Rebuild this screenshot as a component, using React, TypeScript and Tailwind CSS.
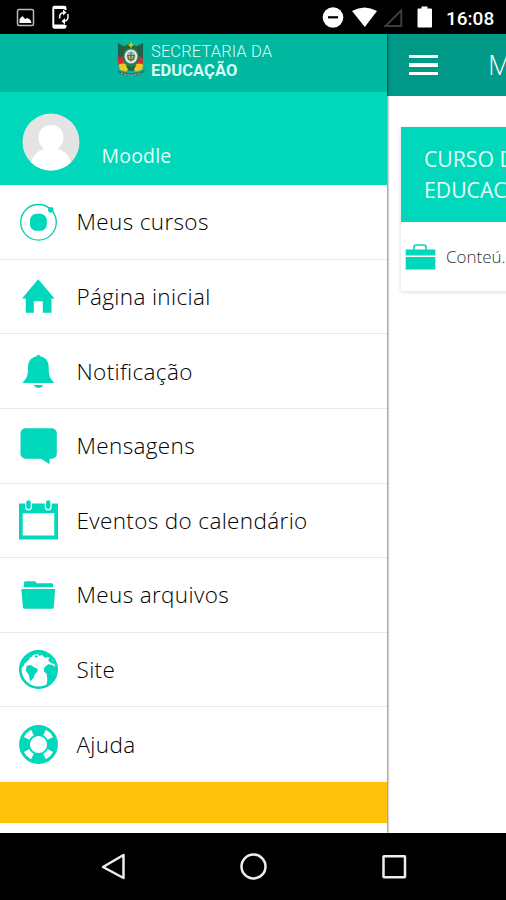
import type { ReactNode } from "react";

const Svg = ({ children, className = "w-10 h-10" }: { children: ReactNode; className?: string }) => (
  <svg viewBox="0 0 40 40" className={className} fill="#00d7bb">
    {children}
  </svg>
);

const items: { label: string; icon: ReactNode }[] = [
  {
    label: "Meus cursos",
    icon: (
      <Svg>
        <circle cx="20.5" cy="20.3" r="17.8" fill="none" stroke="#00cdb2" strokeWidth="1.3" />
        <rect x="12" y="11.8" width="16.800" height="17" rx="6.500" />
        <circle cx="32.8" cy="7.8" r="2.8" />
      </Svg>
    ),
  },
  {
    label: "Página inicial",
    icon: (
      <Svg>
        <path d="M20.2 3.2 36.5 22.6H33.5V36.7H24.8V25.2H15.8V36.7H7.8V22.6H4Z" />
      </Svg>
    ),
  },
  {
    label: "Notificação",
    icon: (
      <Svg>
        <path d="M20.5 3.900c1 0 2 .7 2.200 1.600 5.200 1.100 8 5 8 10.500 0 8.500.8 11 5.800 15.900H4.200C9.200 27 10 24.500 10 16 10 10.500 13.100 6.600 18.300 5.500c.2-.9 1.200-1.600 2.200-1.600Z" />
        <path d="M15.800 34h9.400c-.8 2-2.500 3-4.700 3s-3.900-1-4.700-3Z" />
      </Svg>
    ),
  },
  {
    label: "Mensagens",
    icon: (
      <Svg>
        <path d="M7.500 2.300h26.300a5 5 0 0 1 5 5v20.400a5 5 0 0 1-5 5h-2.200v5.500l-8.500-5.500H7.500a5 5 0 0 1-5-5V7.300a5 5 0 0 1 5-5Z" />
      </Svg>
    ),
  },
  {
    label: "Eventos do calendário",
    icon: (
      <Svg>
        <path fillRule="evenodd" d="M1 3.400h39v36.200H1ZM4.700 13.200v22.300h31.600V13.200Z" />
        <rect x="7" y="-1" width="7" height="11.500" rx="3.500" fill="white" />
        <rect x="26.700" y="-1" width="7" height="11.500" rx="3.500" fill="white" />
        <rect x="8.300" y=".3" width="4.400" height="8.600" rx="2.200" />
        <rect x="28" y=".3" width="4.400" height="8.600" rx="2.200" />
      </Svg>
    ),
  },
  {
    label: "Meus arquivos",
    icon: (
      <Svg>
        <path d="M5.800 12.200V8q0-1.700 1.700-1.700h9q1.600 0 2 2h15.200q1.500 0 1.500 1.500v2.400Z" />
        <path d="M3.300 14h33.800l-1.400 18.500q-.1 1.200-1.500 1.200H6.500q-1.300 0-1.500-1.200Z" />
      </Svg>
    ),
  },
  {
    label: "Site",
    icon: (
      <Svg>
        <circle cx="20.500" cy="19.500" r="18.200" fill="white" stroke="#00d2b7" strokeWidth="2.600" />
        <path d="M5 8C8 4.500 12 2.500 17 2l13 1 6 6-3 1-3-3-3 1-3-3-3 1-1-2-5 1-1 2-3 0-1 3-3 3-2 4-3-1Z" />
        <path d="m8.700 15.700 4-.6 3 2 3.700 1.700.5 2.300-3 3-1.100 3.500-3.500 4-1.600-6.800-3-4.300Z" />
        <path d="m27 17 3-2.700 4 .5 4.500 3-.5 8-6 9-3.500 2 .8-7-.6-6-2.600-2-.4-3ZM30 9.500l2-1 4.500 4v2l-5-2.500Z" />
        <path d="m15 4 2 2 2-1 1 2-2 1Z" />
        <path d="m15 9 5-2 4.500-.500 4 2.500-1 2-3 2-3 3-3-1-2 2-3-3-2-1Z" fill="white" />
        <path d="m9 8 4-1.500-2 3-4 4Z" />
      </Svg>
    ),
  },
  {
    label: "Ajuda",
    icon: (
      <Svg>
        <circle cx="20.500" cy="19.500" r="14" fill="none" stroke="#00d7bb" strokeWidth="10.800" />
        <circle
          cx="20.500"
          cy="19.500"
          r="13.400"
          fill="none"
          stroke="white"
          strokeWidth="6"
          pathLength="360"
          strokeDasharray="36 54"
          strokeDashoffset="-27"
        />
      </Svg>
    ),
  },
];

function Crest() {
  return (
    <svg viewBox="1.500 0 27 36" preserveAspectRatio="none" className="mt-[6px] h-[37px] w-[30px]">
      <path d="M3 3 9 6 14 3l6 3 6-3-2 17H5Z" fill="#20683f" />
      <path d="M4 4v15M7 6v10M22 6v10M25 4v15" stroke="#24584f" strokeWidth="1.500" />
      <path d="M3 17 7 16 9 26 4 25ZM26 17l-4-1-2 10 5-1Z" fill="#e5242b" />
      <path d="M4 24q5-3 9 2l-2 5-6-2ZM26 24q-5-3-9 2l2 5 6-2Z" fill="#f7c51d" />
      <path d="m10 24 5 2 5-2-3 6h-4Z" fill="#246638" />
      <ellipse cx="15" cy="16.500" rx="7.500" ry="9" fill="#2d7948" />
      <ellipse cx="15" cy="16" rx="5.800" ry="6.800" fill="#e5ece0" />
      <ellipse cx="15" cy="16" rx="4" ry="5" fill="#9cb7c9" />
      <path d="M15 12v9M12 15h6l-1 4h-4Z" stroke="#55713b" fill="#c5b951" />
      <path d="m15 1 1 3 2 .5-2 1.500-1 2-1-2-2-1.500 2-.5Z" fill="#b5c936" />
      <path d="M2 29q6 4 13 3 7 1 13-3-4 7-13 5-9 2-13-5Z" fill="#42645d" />
      <path d="M6 32q9 4 18 0" stroke="#b6cec5" strokeWidth=".8" fill="none" strokeDasharray="2 1" />
    </svg>
  );
}

function StatusBar() {
  return (
    <header className="flex h-[34px] shrink-0 items-center bg-black">
      <svg className="h-[34px] w-20" viewBox="0 0 80 34">
        <rect x="17.500" y="9.500" width="16" height="16" rx="1.500" fill="none" stroke="#bbb" strokeWidth="1.500" />
        <path d="m19.500 23 0-4 3-3 2.500 3 2.500-1 3 2 1 3Z" fill="white" />
        <path d="M65.500 10V8q0-1.200-1.200-1.200H54.500q-1.200 0-1.200 1.200v18.500q0 1.200 1.200 1.200h9.800q1.200 0 1.200-1.200V25" fill="none" stroke="white" strokeWidth="2" />
        <path d="M53 7.500h12M53 26h12" stroke="white" strokeWidth="3" />
        <path d="M59.800 18.500q-1-5.500 4.200-6M67.800 14q1.500 6.500-4 7.200" fill="none" stroke="white" strokeWidth="1.500" />
        <path d="m63 9.500 3.500 3-3.500 3ZM65 18v6.500l-3.500-3.200Z" fill="white" />
      </svg>
      <svg className="ml-auto h-[34px] w-[125px]" viewBox="320 0 125 34">
        <circle cx="333" cy="17.500" r="10.300" fill="white" />
        <path d="M328 17.300h10" stroke="black" strokeWidth="2.200" />
        <path d="M352 11q12.500-7 25 0L364.800 27Z" fill="white" />
        <path d="M385.500 26 401.300 10.500V26Z" fill="none" stroke="#3c3c3c" strokeWidth="2" />
        <path d="M418.500 8.500h3v-2h6v2h3.500q1 0 1 1V26.500q0 1-1 1h-12.500q-1 0-1-1V9.500q0-1 1-1Z" fill="white" />
      </svg>
      <span className="w-[61px] pt-[2px] pl-px font-[Roboto,sans-serif] text-[19px] font-medium leading-none text-white">16:08</span>
    </header>
  );
}

function Drawer() {
  return (
    <aside className="z-10 flex w-[387px] shrink-0 flex-col bg-white shadow-[1px_0_2px_rgba(0,0,0,0.5)]">
      <div className="flex h-[58px] shrink-0 bg-[#00b79f] pl-[116px]">
        <Crest />
        <div className="ml-[5px] pt-[8px] font-[Roboto,sans-serif] text-[16.500px] leading-[19px] text-[#d8fff5]">
          <p className="w-max font-light tracking-[0.100px]">SECRETARIA DA</p>
          <p className="w-max font-bold tracking-[0.100px]">EDUCAÇÃO</p>
        </div>
      </div>
      <div className="flex h-[93px] shrink-0 bg-[#00d7bb] pl-[22px] pt-[21px]">
        <svg className="h-[58px] w-[58px]" viewBox="0 0 58 58">
          <defs>
            <clipPath id="avatar">
              <circle cx="29" cy="29" r="28.500" />
            </clipPath>
          </defs>
          <g clipPath="url(#avatar)">
            <rect width="58" height="58" fill="#e4e4e4" />
            <path d="M29 12c8 0 12.500 6 12.500 12.500 0 5-2.500 8-5.500 11.500 7 2 11.500 7 13 14L44 58H14l-5-8c1.500-7 6-12 13-14-3-3.500-5.500-6.500-5.500-11.500C16.500 18 21 12 29 12Z" fill="white" />
          </g>
        </svg>
        <span className="ml-[21.500px] mt-[29px] text-[19.500px] leading-[28px] tracking-[0.200px] text-[#e5fff9]">Moodle</span>
      </div>
      <nav className="grid h-[597px] shrink-0 grid-rows-8">
        {items.map((item) => (
          <a key={item.label} className="flex items-center border-b border-[#e8e8e8] pl-[18px] last:border-0">
            {item.icon}
            <span className="ml-[18.500px] pt-px text-[22.500px] font-light leading-[30px] tracking-[0.360px] text-black">
              {item.label}
            </span>
          </a>
        ))}
      </nav>
      <div className="h-[41px] shrink-0 bg-[#ffc20a]" />
    </aside>
  );
}

function Courses() {
  return (
    <main className="min-w-0 flex-1 overflow-hidden bg-white">
      <div className="flex h-[61.500px] items-center bg-[#009988] pl-[22px]">
        <div className="flex w-[29px] shrink-0 flex-col gap-[5px]">
          <i className="h-[3.500px] bg-white" />
          <i className="h-[3.500px] bg-white" />
          <i className="h-[3.500px] bg-white" />
        </div>
        <span className="ml-[50px] text-[27px] font-light text-white">M</span>
      </div>
      <section className="ml-[14px] mt-[31.500px] h-[164px] w-[120px] bg-white shadow-[0_1px_4px_rgba(0,0,0,0.15)]">
        <div className="h-[95px] whitespace-nowrap bg-[#00d7bb] pl-[23px] pt-[15.500px] text-[21.200px] leading-[31px] text-[#e5fff9]">
          <p>CURSO D</p>
          <p>EDUCAC</p>
        </div>
        <div className="flex h-[69px] items-center pl-[4px]">
          <svg className="h-[27px] w-[31px] shrink-0" viewBox="0 0 31 27" fill="#00d7bb">
            <path d="M9 7V4q0-2 2-2h8q2 0 2 2v3" fill="none" stroke="#00d7bb" strokeWidth="1.700" />
            <path d="M.700 6.500h29.600v6H.7ZM.7 14h29.600v12.500H.7Z" />
          </svg>
          <span className="ml-[10px] whitespace-nowrap text-[17px] font-light text-[#333]">Conteú...</span>
        </div>
      </section>
    </main>
  );
}

export default function App() {
  return (
    <div className="flex h-[900px] w-[506px] flex-col overflow-hidden bg-white font-['Open_Sans',sans-serif]">
      <StatusBar />
      <div className="flex min-h-0 flex-1 overflow-hidden">
        <Drawer />
        <Courses />
      </div>
      <footer className="h-[67px] shrink-0 bg-black">
        <svg viewBox="0 0 506 67" className="h-[67px] w-[506px]" fill="none" stroke="#eee" strokeWidth="2.500">
          <path d="M103 34 123.500 22V45Z" strokeLinejoin="round" />
          <circle cx="253.500" cy="33.500" r="12" />
          <rect x="383.500" y="23.200" width="21.500" height="21" rx=".5" />
        </svg>
      </footer>
    </div>
  );
}
